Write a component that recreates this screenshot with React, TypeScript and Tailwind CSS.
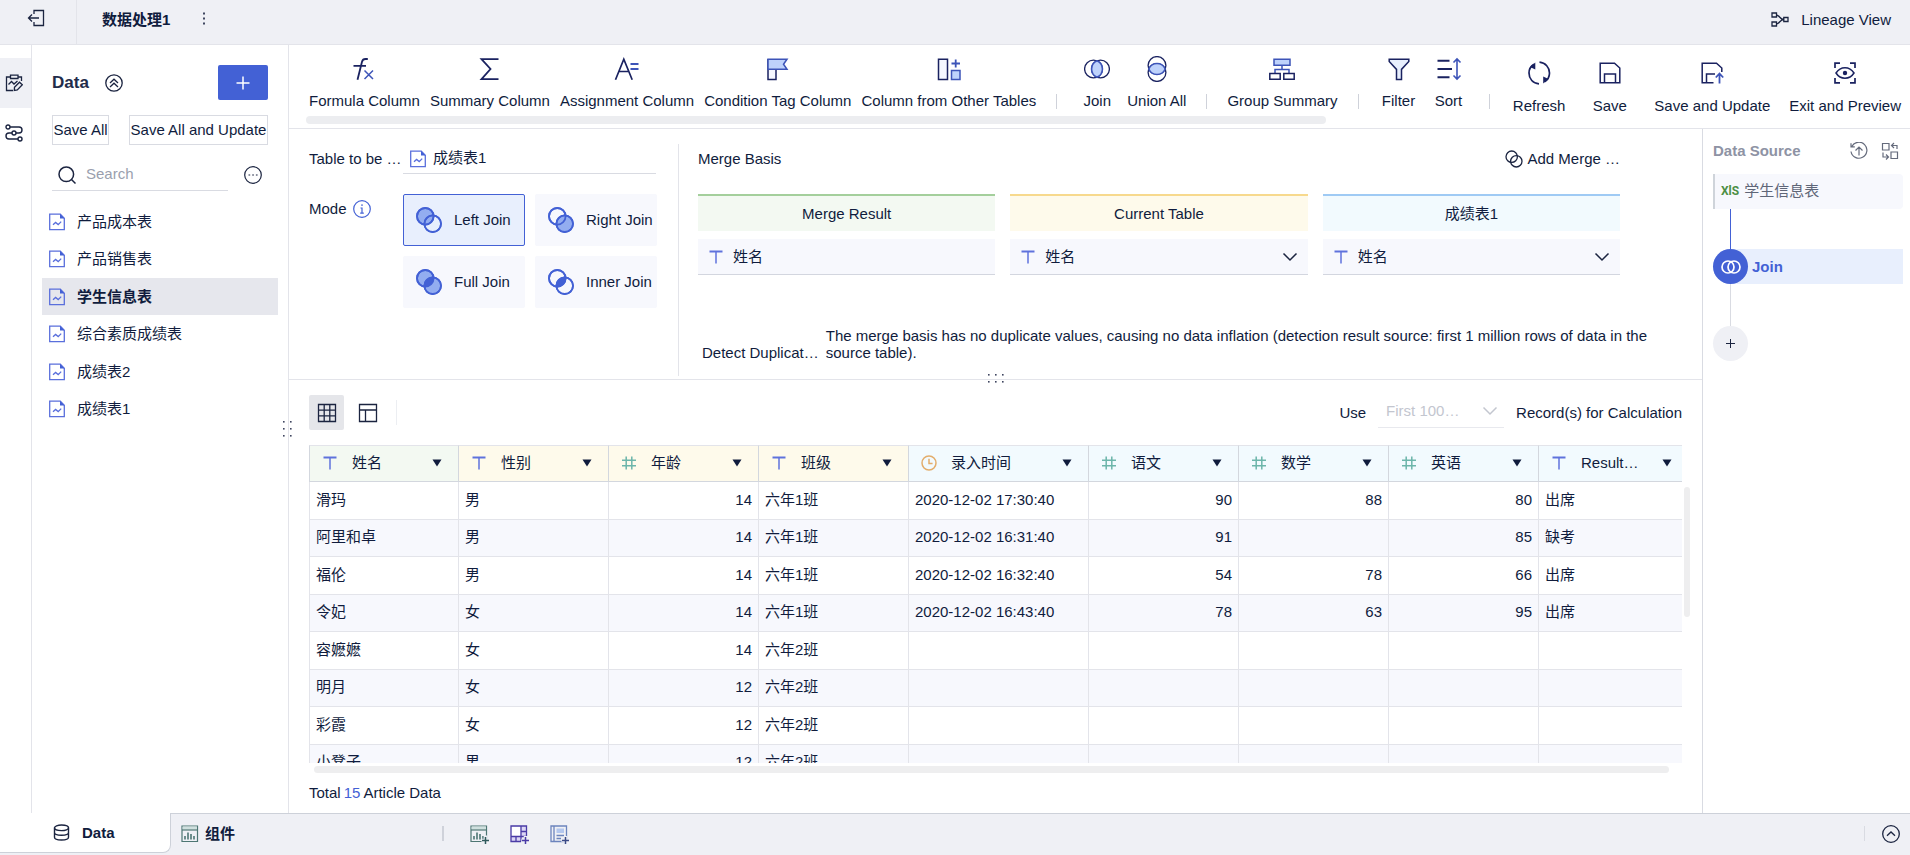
import type { ReactNode } from "react";
import { clsx } from "clsx";

const NAVY = "#1a2260";
const BLUE = "#4361d5";
const ACCENT = "#3d54b8";
const INK = "#1b2440";

const tables = ["产品成本表", "产品销售表", "学生信息表", "综合素质成绩表", "成绩表2", "成绩表1"];

const joinModes = [
  { id: "left", label: "Left Join" },
  { id: "right", label: "Right Join" },
  { id: "full", label: "Full Join" },
  { id: "inner", label: "Inner Join" },
];

const columns = [
  { name: "姓名", type: "text", source: "merge" },
  { name: "性别", type: "text", source: "current" },
  { name: "年龄", type: "number", source: "current" },
  { name: "班级", type: "text", source: "current" },
  { name: "录入时间", type: "date", source: "other" },
  { name: "语文", type: "number", source: "other" },
  { name: "数学", type: "number", source: "other" },
  { name: "英语", type: "number", source: "other" },
  { name: "Result…", type: "text", source: "other" },
];

const rows = [
  ["滑玛", "男", "14", "六年1班", "2020-12-02 17:30:40", "90", "88", "80", "出席"],
  ["阿里和卓", "男", "14", "六年1班", "2020-12-02 16:31:40", "91", "", "85", "缺考"],
  ["福伦", "男", "14", "六年1班", "2020-12-02 16:32:40", "54", "78", "66", "出席"],
  ["令妃", "女", "14", "六年1班", "2020-12-02 16:43:40", "78", "63", "95", "出席"],
  ["容嬷嬷", "女", "14", "六年2班", "", "", "", "", ""],
  ["明月", "女", "12", "六年2班", "", "", "", "", ""],
  ["彩霞", "女", "12", "六年2班", "", "", "", "", ""],
  ["小凳子", "男", "12", "六年2班", "", "", "", "", ""],
];

const headerColors: Record<string, string> = {
  merge: "bg-[#f3f9f2]",
  current: "bg-[#fefaeb]",
  other: "bg-[#f2fafe]",
};

interface SvgProps {
  size?: number;
  color?: string;
  width?: number;
  children: ReactNode;
}

function Svg({ size = 26, color = NAVY, width = 1.5, children }: SvgProps) {
  return (
    <svg className="shrink-0" width={size} height={size} viewBox={`0 0 ${size} ${size}`} fill="none" stroke={color} strokeWidth={width} aria-hidden="true">
      {children}
    </svg>
  );
}

function Dots({ cols, rows }: { cols: number; rows: number }) {
  const w = cols * 7;
  const h = rows * 7;
  return (
    <svg width={w} height={h} viewBox={`0 0 ${w} ${h}`} fill="#3f4660" aria-hidden="true">
      {Array.from({ length: cols * rows }, (_, i) => (
        <rect key={i} x={(i % cols) * 7 + 3} y={Math.floor(i / cols) * 7 + 3} width="1.6" height="1.6" />
      ))}
    </svg>
  );
}

function SheetIcon() {
  return (
    <Svg size={18} color="#5a6fdc" width={1.3}>
      <path d="M1.7 1.2h10.6l4 4v11.5H1.7z" />
      <path d="M12 1v4.6h4.5z" fill="#4361d5" stroke="none" />
      <path d="M5 11.8l2.6-2.4 2.6 2.2 3-3" />
    </Svg>
  );
}

function TypeIcon({ type }: { type: string }) {
  if (type === "number") {
    return (
      <Svg size={16} color="#6cb5aa">
        <path d="M5.2 1.5v13M10.8 1.5v13M1 5.2h14M1 10.8h14" />
      </Svg>
    );
  }
  if (type === "date") {
    return (
      <Svg size={16} color="#e3ad6c">
        <circle cx="8" cy="8" r="7" />
        <path d="M8 3.8V8.6h3.6" />
      </Svg>
    );
  }
  return (
    <Svg size={16} color="#5f72dc">
      <path d="M1.5 2.5h13" strokeWidth="2" />
      <path d="M8 2.5v12" />
    </Svg>
  );
}

function Chevron({ color = INK }: { color?: string }) {
  return (
    <Svg size={16} color={color}>
      <path d="M1.5 4.5L8 11l6.5-6.5" />
    </Svg>
  );
}

function JoinModeIcon({ mode }: { mode: string }) {
  const left = mode === "left" || mode === "full" ? "#93adf0" : "none";
  const right = mode === "right" || mode === "full" ? "#93adf0" : "none";
  const lens = mode === "full" || mode === "inner" ? BLUE : "none";
  return (
    <Svg size={26} color={BLUE} width={1.8}>
      <circle cx="9.3" cy="9.3" r="8.3" fill={left} />
      <circle cx="16.7" cy="16.7" r="8.3" fill={right} />
      <path d="M17.4 8.4A8.3 8.3 0 0 1 8.6 17.4A8.3 8.3 0 0 1 17.4 8.4z" fill={lens} stroke="none" />
      <circle cx="9.3" cy="9.3" r="8.3" />
      <circle cx="16.7" cy="16.7" r="8.3" />
    </Svg>
  );
}

function ChartIcon({ add = false }: { add?: boolean }) {
  return (
    <Svg size={20} color="#4d7673" width={1.2}>
      <path d="M2 2h15.5v15.5H2z" />
      <path d="M2.6 2.6h14.3v3H2.6z" fill="#cfe0de" stroke="none" />
      <path d="M2 6h15.5" />
      <path d="M5 15.5v-3.500M8 15.5V8.500M11 15.5v-5.500M14 15.5v-3.500" strokeWidth="1.6" />
      {add && (
        <>
          <path d="M16.5 11.5v8M12.5 16.5h7" stroke="#eff0f5" strokeWidth="3.5" />
          <path d="M16.5 13v7M13 16.5h7" stroke="#2f5a5c" strokeWidth="1.5" />
        </>
      )}
    </Svg>
  );
}

const icons: Record<string, ReactNode> = {
  formula: (
    <Svg>
      <path d="M16.800 3h-2.300c-2 0-3 .8-3.500 2.800L6.500 23.800M2.500 9.800H15" strokeWidth="1.800" />
      <path d="M13.500 14.500l8.500 8.500M22 14.500L13.500 23" stroke={ACCENT} />
    </Svg>
  ),
  summary: (
    <Svg>
      <path d="M21.500 3.200H4.500l9 9.800-9 10.200h17" strokeWidth="1.800" />
    </Svg>
  ),
  assignment: (
    <Svg>
      <path d="M1.500 23.800l8.300-20.500 8.400 20.500M4.800 15.500h10" strokeWidth="1.700" />
      <path d="M16.500 8H24.500M16.500 13H24.500" stroke={ACCENT} strokeWidth="1.800" />
    </Svg>
  ),
  tag: (
    <Svg>
      <path d="M3 3v20.500h8V13" fill="#f5f7ff" />
      <path d="M3 3.200h19l-3.500 5 3.500 5H3z" fill="#bed2fb" stroke={ACCENT} />
    </Svg>
  ),
  column: (
    <Svg>
      <path d="M2.500 3.200h9v20.300h-9z" fill="#f5f7ff" />
      <path d="M15.500 14.500h8.500v9h-8.500z" fill="#bed2fb" stroke={ACCENT} />
      <path d="M19.700 3.500v8M15.500 7.500h8.500" stroke={ACCENT} strokeWidth="1.800" />
    </Svg>
  ),
  join: (
    <Svg width={1.300}>
      <circle cx="9.500" cy="13" r="8.900" />
      <circle cx="16.500" cy="13" r="8.900" />
      <path d="M13 4.800a8.900 8.900 0 0 1 0 16.400a8.900 8.900 0 0 1 0-16.400z" fill="#bed2fb" stroke={ACCENT} strokeWidth="1.600" />
    </Svg>
  ),
  union: (
    <Svg width={1.300}>
      <circle cx="13" cy="9.500" r="8.900" />
      <circle cx="13" cy="16.500" r="8.900" />
      <path d="M4.800 13a8.900 8.900 0 0 1 16.400 0a8.900 8.900 0 0 1-16.400 0z" fill="#bed2fb" stroke={ACCENT} strokeWidth="1.600" />
    </Svg>
  ),
  group: (
    <Svg>
      <path d="M13 9v4.500M6 17.500v-4h14v4" stroke={ACCENT} />
      <path d="M5 3.200h16v6H5z" fill="#bed2fb" stroke={ACCENT} />
      <path d="M.8 17.500h10.400v5.700H.8zM14.800 17.500h10.400v5.700H14.800z" />
    </Svg>
  ),
  filter: (
    <Svg>
      <path d="M3.200 3.200h19.600v2.200l-7.300 8v10h-5v-10l-7.300-8z" fill="#e8effd" />
    </Svg>
  ),
  sort: (
    <Svg>
      <path d="M1.500 4.800h12M1.500 13H16M1.500 21.200h12" strokeWidth="1.900" />
      <path d="M21 3v20M17.500 6.500L21 3l3.500 3.500M17.500 19.500L21 23l3.500-3.500" stroke={ACCENT} strokeWidth="1.600" />
    </Svg>
  ),
  refresh: (
    <Svg width={1.700}>
      <path d="M13 23.800C7 23.500 3 18.800 3 13c0-4 2-7 5-8.800M13.500 2.200C19.500 2.700 23.500 7.500 23.500 13c0 4-2 7-5 8.800" />
      <path d="M9.300 2.500v7L4 7zM17.200 23.500v-7l5.300 2.500z" fill={NAVY} stroke="none" />
    </Svg>
  ),
  save: (
    <Svg>
      <path d="M3.200 3.200h14.300l5.300 4.800v14.800H3.200z" />
      <path d="M7.500 22.800v-8.800h11v8.800" />
    </Svg>
  ),
  saveUpdate: (
    <Svg>
      <path d="M14.500 22.800H3.200V3.200h14.300l5.300 4.800v4M7.500 22.800v-8.800h8.500" />
      <path d="M20.500 23.500v-10M16.800 17.500l3.700-4 3.700 4" stroke={ACCENT} strokeWidth="1.800" />
    </Svg>
  ),
  preview: (
    <Svg>
      <path d="M3 8V3.200h5M18 3.200h5V8M23 18v4.800h-5M8 22.800H3V18" strokeWidth="1.700" />
      <path d="M4 13c4.500-7 13.500-7 18 0-4.500 7-13.500 7-18 0z" />
      <circle cx="13" cy="13" r="2.200" fill={NAVY} stroke="none" />
    </Svg>
  ),
};

const toolGroups = [
  [
    { icon: "formula", label: "Formula Column" },
    { icon: "summary", label: "Summary Column" },
    { icon: "assignment", label: "Assignment Column" },
    { icon: "tag", label: "Condition Tag Column" },
    { icon: "column", label: "Column from Other Tables" },
  ],
  [
    { icon: "join", label: "Join" },
    { icon: "union", label: "Union All" },
  ],
  [{ icon: "group", label: "Group Summary" }],
  [
    { icon: "filter", label: "Filter" },
    { icon: "sort", label: "Sort" },
  ],
];

const pageActions = [
  { icon: "refresh", label: "Refresh" },
  { icon: "save", label: "Save" },
  { icon: "saveUpdate", label: "Save and Update" },
  { icon: "preview", label: "Exit and Preview" },
];

function TopBar() {
  return (
    <header className="flex h-[45px] shrink-0 items-stretch border-b border-[#e3e4ea] bg-[#eff0f5]">
      <button className="flex w-[77px] items-center border-r border-[#e3e4ea] pb-2 pl-[27px]" aria-label="Exit">
        <Svg size={18} color={INK} width={1.300}>
          <path d="M7 5V1.500h9.500v15H7V13M12 9H1.500M5 5.500L1.500 9 5 12.500" />
        </Svg>
      </button>
      <div className="flex flex-1 items-center gap-8 pb-1 pl-[25px]">
        <h1 className="font-bold">数据处理1</h1>
        <button className="pb-1" aria-label="More">
          <svg width="4" height="14" viewBox="0 0 4 14" fill="#3f4660" aria-hidden="true">
            <path d="M1 1.500h2v2H1zM1 6.500h2v2H1zM1 11.500h2v2H1z" />
          </svg>
        </button>
      </div>
      <a href="#lineage" className="flex items-center gap-3 pb-1 pr-[19px]">
        <Svg size={18} color={INK} width={1.300}>
          <path d="M1 2h4.500v4H1zM1 11h4.500v4H1zM12.800 6.500H17v4h-4.200zM5.500 4c3.300.5 3.500 4.500 7.300 4.500M5.500 13c3.300-.5 3.500-4.500 7.300-4.500" />
        </Svg>
        Lineage View
      </a>
    </header>
  );
}

function Rail() {
  return (
    <nav className="flex w-8 shrink-0 flex-col border-r border-[#e3e4ea] pt-[13px]">
      <button className="flex h-[50px] items-center justify-center bg-[#eff0f5] pr-1" aria-label="Edit data">
        <Svg size={18} color={INK} width={1.300}>
          <path d="M5 3H1.500v13.500H8M13 3h3.500v4M5.500 1.200h7.500v3.300H5.500zM3.500 10.500l3-3 2.500 2.500 3.500-3" />
          <path d="M9.500 13.200l5-5 2.800 2.600-5 5.200-3 .5z" />
        </Svg>
      </button>
      <button className="flex h-[50px] items-center justify-center pr-1" aria-label="Flow">
        <Svg size={18} color={INK} width={1.400}>
          <circle cx="3" cy="3" r="2" />
          <circle cx="9" cy="9" r="2" />
          <circle cx="15" cy="15" r="2" />
          <path d="M5 3h9a3 3 0 0 1 0 6h-3M7 9H4a3 3 0 0 0 0 6h9" />
        </Svg>
      </button>
    </nav>
  );
}

function DataPanel() {
  return (
    <aside className="relative w-[257px] shrink-0 border-r border-[#e3e4ea]">
      <div className="px-5 pt-5">
        <div className="flex h-[35px] items-center">
          <h2 className="text-[17px] font-bold text-[#222c4a]">Data</h2>
          <button className="ml-4" aria-label="Collapse all">
            <Svg size={18} color={INK} width={1.300}>
              <circle cx="9" cy="9" r="8.200" />
              <path d="M5 9l4-3.800L13 9M5 13l4-3.800 4 3.800" />
            </Svg>
          </button>
          <button className="ml-auto flex h-[35px] w-[50px] items-center justify-center rounded-xs bg-[#4361d5]" aria-label="Add table">
            <Svg size={14} color="#ffffff">
              <path d="M7 .5v13M.5 7h13" />
            </Svg>
          </button>
        </div>
        <div className="mt-[15px] flex justify-between">
          <button className="h-[30px] w-[57px] whitespace-nowrap border border-[#d9dbe2]">Save All</button>
          <button className="h-[30px] w-[139px] whitespace-nowrap border border-[#d9dbe2]">Save All and Update</button>
        </div>
        <div className="mt-[14px] flex items-center justify-between">
          <label className="flex h-8 w-44 items-center gap-[10px] border-b border-[#d9dbe2] pl-1.5">
            <Svg size={18} color={INK} width={1.500}>
              <circle cx="8.300" cy="8.300" r="7.300" />
              <path d="M13.500 13.500l4 4" />
            </Svg>
            <input className="w-full min-w-0 pb-0.5 outline-none placeholder:text-[#9a9fae]" type="text" placeholder="Search" aria-label="Search" />
          </label>
          <button className="mr-1.5" aria-label="More options">
            <Svg size={18} color={INK} width={1.200}>
              <circle cx="9" cy="9" r="8.300" />
              <path d="M4.500 9h1.700M8.200 9h1.700M11.900 9h1.700" />
            </Svg>
          </button>
        </div>
      </div>
      <ul className="mt-3 px-[10px]">
        {tables.map((name) => (
          <li key={name} className="flex odd:h-[37px] even:h-[38px]">
            <button
              className={clsx(
                "flex flex-1 items-center gap-[11px] pl-1.5 text-left",
                name === "学生信息表" && "bg-[#e6e7ed] font-bold"
              )}
            >
              <SheetIcon />
              {name}
            </button>
          </li>
        ))}
      </ul>
      <div className="absolute top-[373px] -right-1.5 z-10 cursor-col-resize">
        <Dots cols={2} rows={3} />
      </div>
    </aside>
  );
}

function Toolbar() {
  return (
    <div className="flex h-[84px] shrink-0 border-b border-[#e3e4ea]">
      <div className="min-w-0 flex-1 overflow-hidden pt-[11px]">
        <div className="flex pl-[15px]">
          {toolGroups.map((group, i) => (
            <div key={i} className="flex shrink-0 items-end">
              {i > 0 && <span className="mx-[15px] mb-0.5 h-[15px] w-px bg-[#cfd2da]" />}
              {group.map((tool) => (
                <button key={tool.label} className="flex min-w-[50px] flex-col items-center gap-[9px] px-[5px] whitespace-nowrap">
                  {icons[tool.icon]}
                  {tool.label}
                </button>
              ))}
            </div>
          ))}
          <span className="mx-[15px] mb-0.5 h-[15px] w-px shrink-0 self-end bg-[#cfd2da]" />
        </div>
        <div className="mt-[5px] ml-[17px] h-2 w-[84%] rounded-full bg-[#ecedf0]" />
      </div>
      <div className="flex shrink-0 pt-[15px]">
        {pageActions.map((action) => (
          <button
            key={action.label}
            className="flex min-w-[70px] flex-col items-center gap-[10px] self-start pr-[9px] pl-[10px] whitespace-nowrap"
          >
            {icons[action.icon]}
            {action.label}
          </button>
        ))}
      </div>
    </div>
  );
}

function FieldSelect({ label }: { label: string }) {
  return (
    <div className="flex h-9 items-center gap-[9px] border-b border-[#d3d6df] bg-[#f7f8fd] px-[10px]">
      <TypeIcon type="text" />
      <select className="min-w-0 flex-1 appearance-none bg-transparent outline-none" aria-label={label} defaultValue="姓名">
        <option>姓名</option>
      </select>
      <Chevron />
    </div>
  );
}

function JoinSettings() {
  return (
    <section className="relative flex h-[251px] shrink-0 border-b border-[#e3e4ea] pl-5">
      <div className="w-[349px] shrink-0 pt-[15px]">
        <div className="flex h-[30px] items-center">
          <label htmlFor="merge-table" className="w-[94px]">Table to be …</label>
          <div className="flex h-[30px] w-[253px] items-center gap-1.5 border-b border-[#d9dbe2] pl-1.5">
            <SheetIcon />
            <input id="merge-table" className="w-full min-w-0 pb-0.5 outline-none" type="text" defaultValue="成绩表1" />
          </div>
        </div>
        <fieldset className="mt-5 flex" aria-label="Join mode">
          <div className="flex h-[30px] w-[94px] items-center gap-1.5">
            Mode
            <Svg size={18} color={BLUE} width={1.200}>
              <circle cx="9" cy="9" r="8.300" />
              <path d="M9 4.200v1.800M9 7.500v6M7.500 8H9M7.200 13.200h3.600" />
            </Svg>
          </div>
          <div className="grid grid-cols-[122px_122px] gap-[10px]">
            {joinModes.map((mode) => (
              <label
                key={mode.id}
                className="flex h-[52px] items-center gap-3 rounded-xs border border-[#f7f8fd] bg-[#f7f8fd] pl-3 whitespace-nowrap has-checked:border-[#4361d5] has-checked:bg-[#e8effd]"
              >
                <input className="sr-only" type="radio" name="mode" value={mode.id} defaultChecked={mode.id === "left"} />
                <JoinModeIcon mode={mode.id} />
                {mode.label}
              </label>
            ))}
          </div>
        </fieldset>
      </div>
      <div className="mt-[15px] mb-[3px] ml-5 w-px shrink-0 bg-[#e3e4ea]" />
      <div className="min-w-0 flex-1 pt-[15px] pl-[19px]">
        <div className="flex h-[30px] max-w-[922px] items-center justify-between">
          <h2>Merge Basis</h2>
          <button className="flex items-center gap-1">
            <Svg size={18} color={INK} width={1.300}>
              <circle cx="6.700" cy="6.700" r="5.700" />
              <circle cx="11.300" cy="11.300" r="5.700" />
            </Svg>
            Add Merge …
          </button>
        </div>
        <div className="mt-5 grid max-w-[922px] grid-cols-3 gap-x-[15px] gap-y-2">
          <div className="flex h-[37px] items-center justify-center border-t-2 border-[#a4cf9c] bg-[#f3f9f2]">Merge Result</div>
          <div className="flex h-[37px] items-center justify-center border-t-2 border-[#f7d98d] bg-[#fefaeb]">Current Table</div>
          <div className="flex h-[37px] items-center justify-center border-t-2 border-[#9fcaf4] bg-[#f2fafe]">成绩表1</div>
          <div className="flex h-9 items-center gap-[9px] border-b border-[#d3d6df] bg-[#f7f8fd] pl-[10px]">
            <TypeIcon type="text" />
            姓名
          </div>
          <FieldSelect label="Current Table" />
          <FieldSelect label="成绩表1" />
        </div>
        <div className="mt-[52px] flex items-end gap-[7px] pl-1 leading-[17px]">
          <span className="shrink-0 whitespace-nowrap">Detect Duplicat…</span>
          <p className="max-w-[850px]">
            The merge basis has no duplicate values, causing no data inflation (detection result source: first 1 million rows of data in the source table).
          </p>
        </div>
      </div>
      <div className="absolute inset-x-0 -bottom-1.5 flex cursor-row-resize justify-center">
        <Dots cols={3} rows={2} />
      </div>
    </section>
  );
}

function TableToolbar() {
  return (
    <div className="flex h-[65px] shrink-0 items-center px-5">
      <button className="flex size-[35px] items-center justify-center rounded-xs bg-[#e5e6ea]" aria-label="Grid view">
        <Svg size={20} color={INK} width={1.300}>
          <path d="M1.500 1.500h17v17h-17zM1.500 7.200h17M1.500 12.800h17M7.200 1.500v17M12.800 1.500v17" />
        </Svg>
      </button>
      <button className="ml-[14px]" aria-label="Structure view">
        <Svg size={20} color={INK} width={1.300}>
          <path d="M1.500 1.500h17v17h-17zM1.500 7h17M7.500 7v11.500" />
        </Svg>
      </button>
      <span className="ml-[18px] h-[25px] w-px bg-[#eceef2]" />
      <label htmlFor="row-limit" className="ml-auto">Use</label>
      <div className="mx-3 flex h-[30px] w-[126px] items-center border-b border-[#e8e9ee] pr-1.5 pb-0.5 pl-2">
        <select id="row-limit" className="min-w-0 flex-1 appearance-none bg-transparent text-[#c3c6cf] outline-none">
          <option>First 100…</option>
        </select>
        <Chevron color="#c3c6cf" />
      </div>
      <span>Record(s) for Calculation</span>
    </div>
  );
}

function DataTable() {
  return (
    <div className="flex min-h-0 flex-1">
      <div className="ml-5 min-w-0 flex-1 overflow-hidden">
        <table className="w-[1380px] table-fixed border-separate border-spacing-0">
          <colgroup>
            {columns.map((col) => (
              <col key={col.name} className={col.type === "date" ? "w-[180px]" : "w-[150px]"} />
            ))}
          </colgroup>
          <thead>
            <tr>
              {columns.map((col) => (
                <th
                  key={col.name}
                  className={clsx(
                    "h-[37px] border-y border-r border-[#d3d7de] border-t-[#e3e4ea] p-0 font-normal first:border-l",
                    headerColors[col.source]
                  )}
                >
                  <div className="flex items-center pr-4 pb-0.5 pl-3">
                    <TypeIcon type={col.type} />
                    <span className="ml-[14px] flex-1 text-left">{col.name}</span>
                    <button aria-label={"Column menu " + col.name}>
                      <svg width="10" height="8" viewBox="0 0 10 8" fill="#101c3d">
                        <path d="M.5 .5h9L5 7.500z" />
                      </svg>
                    </button>
                  </div>
                </th>
              ))}
            </tr>
          </thead>
          <tbody>
            {rows.map((row) => (
              <tr key={row[0]} className="odd:h-[38px] even:h-[37px] even:bg-[#f7f8fd]">
                {row.map((cell, i) => (
                  <td
                    key={i}
                    className={clsx(
                      "border-r border-b border-[#e3e4ea] px-1.5 pt-0 pb-0.5 whitespace-nowrap first:border-l",
                      columns[i].type === "number" && "text-right"
                    )}
                  >
                    {cell}
                  </td>
                ))}
              </tr>
            ))}
          </tbody>
        </table>
      </div>
      <div className="mt-[42px] mr-3 ml-0.5 h-[130px] w-1.5 rounded-full bg-[#eeeeef]" />
    </div>
  );
}

function SourcePanel() {
  return (
    <aside className="w-[208px] shrink-0 border-l border-[#d9dbe2] pt-[7px] pr-[7px] pl-[10px]">
      <div className="flex h-[30px] items-center">
        <h2 className="font-bold text-[#8e93a4]">Data Source</h2>
        <button className="ml-auto" aria-label="Update source">
          <Svg size={18} color="#656b7c" width={1.200}>
            <path d="M1.800 4.500A8 8 0 1 1 1 9.500M1 1.200v3.600h3.800M9 13.500V5M5.500 8.500L9 5l3.500 3.500" />
          </Svg>
        </button>
        <button className="mr-1 ml-[13px]" aria-label="Swap source">
          <Svg size={18} color="#656b7c" width={1.200}>
            <path d="M1.500 1.500h6.500V8H1.500zM10 10h6.500v6.500H10zM10.500 3.500H16V7M13 1l-2.500 2.500L13 6M2 10.500V15h5.500M5 12.500L7.500 15 5 17.500" />
          </Svg>
        </button>
      </div>
      <div className="mt-2 flex h-[35px] items-center gap-[5px] rounded-r-sm border-l-2 border-[#cfd4da] bg-[#f7f8fd] pb-0.5 pl-1.5 text-[#5f6678]">
        <span className="font-['Roboto',sans-serif] text-xs font-bold text-[#4d8f45]">XlS</span>
        学生信息表
      </div>
      <div className="ml-[17px] h-10 w-px bg-[#4361d5]" />
      <button className="flex h-[35px] w-full items-center gap-1 rounded-l-full rounded-r-sm bg-[#e8effd] font-bold text-[#4361d5]">
        <span className="flex size-[35px] items-center justify-center rounded-full bg-[#4361d5]">
          <Svg size={20} color="#ffffff" width={1.700}>
            <circle cx="7" cy="10" r="6" />
            <circle cx="13" cy="10" r="6" />
          </Svg>
        </span>
        Join
      </button>
      <div className="ml-[17px] h-[42px] w-px bg-[#d9dbe2]" />
      <button className="flex size-[35px] items-center justify-center rounded-full bg-[#eff0f5]" aria-label="Add step">
        <Svg size={9} color={INK} width={1}>
          <path d="M4.500 0v9M0 4.500h9" />
        </Svg>
      </button>
    </aside>
  );
}

function BottomBar() {
  return (
    <footer className="flex h-[42px] shrink-0 bg-[#eff0f5]">
      <button className="flex h-10 w-[171px] items-center gap-3 rounded-br-lg border-r border-b border-[#cdd1d9] bg-white pl-[53px] font-bold">
        <Svg size={17} color={INK} width={1.400}>
          <ellipse cx="8.500" cy="3.800" rx="7" ry="2.800" />
          <path d="M1.500 3.800v9.400c0 3.700 14 3.700 14 0V3.800M1.500 8.500c0 3.700 14 3.700 14 0" />
        </Svg>
        Data
      </button>
      <div className="flex flex-1 items-center border-t border-[#cdd1d9] pb-0.5 pl-[9px]">
        <button className="flex w-[262px] items-center gap-[5px] font-bold">
          <ChartIcon />
          组件
        </button>
        <span className="h-[15px] w-0.5 bg-[#cfd2da]" />
        <button className="ml-[25px]" aria-label="Add component">
          <ChartIcon add />
        </button>
        <button className="ml-5" aria-label="Add dashboard">
          <Svg size={20} color="#4a3ba6" width={1.300}>
            <path d="M12 2h5.500v10H12zM2 13h10v4.500H2z" fill="#dcd6f5" stroke="none" />
            <path d="M2.500 2.500h9v9.500h-9z" fill="#ffffff" stroke="none" />
            <path d="M12 17.500H2V2h15.500v10M12 2v15.500M2 12.500h15.500M12 7.500h5.500M7 12.500v5" />
            <path d="M16.500 12v8M12.500 16.500h7" stroke="#eff0f5" strokeWidth="3.500" />
            <path d="M16.500 13v7M13 16.500h7" strokeWidth="1.500" />
          </Svg>
        </button>
        <button className="ml-5" aria-label="Add report">
          <Svg size={20} color="#6c84bd" width={1.300}>
            <path d="M2 2h15.500v15.500H2zM5 2v15.500" />
            <path d="M7.500 4.500H15V9H7.500z" fill="#b3c7ee" stroke="none" />
            <path d="M7.500 11.500H15M7.500 14.500H12" />
            <path d="M16.500 12v8M12.500 16.500h7" stroke="#eff0f5" strokeWidth="3.500" />
            <path d="M16.500 13v7M13 16.500h7" stroke="#3b4a86" strokeWidth="1.500" />
          </Svg>
        </button>
        <span className="ml-auto h-[15px] w-px bg-[#d9dbe2]" />
        <button className="mr-[10px] ml-[17px]" aria-label="Expand">
          <Svg size={18} color={INK} width={1.300}>
            <circle cx="9" cy="9" r="8.300" />
            <path d="M5 10.800L9 7l4 3.800" />
          </Svg>
        </button>
      </div>
    </footer>
  );
}

export default function App() {
  return (
    <div className="flex h-screen flex-col overflow-hidden bg-white font-['Liberation_Sans','Noto_Sans_CJK_SC',sans-serif] text-[15px] leading-5 text-[#101c3d]">
      <TopBar />
      <div className="flex min-h-0 flex-1">
        <Rail />
        <DataPanel />
        <main className="flex min-w-0 flex-1 flex-col">
          <Toolbar />
          <div className="flex min-h-0 flex-1">
            <div className="flex min-w-0 flex-1 flex-col">
              <JoinSettings />
              <TableToolbar />
              <DataTable />
              <div className="mt-[3px] mr-[33px] ml-[25px] h-[7px] shrink-0 rounded-full bg-[#eeeeef]" />
              <div className="flex h-10 shrink-0 items-center gap-[3px] pl-5">
                Total <span className="text-[#4361d5]">15</span> Article Data
              </div>
            </div>
            <SourcePanel />
          </div>
        </main>
      </div>
      <BottomBar />
    </div>
  );
}
